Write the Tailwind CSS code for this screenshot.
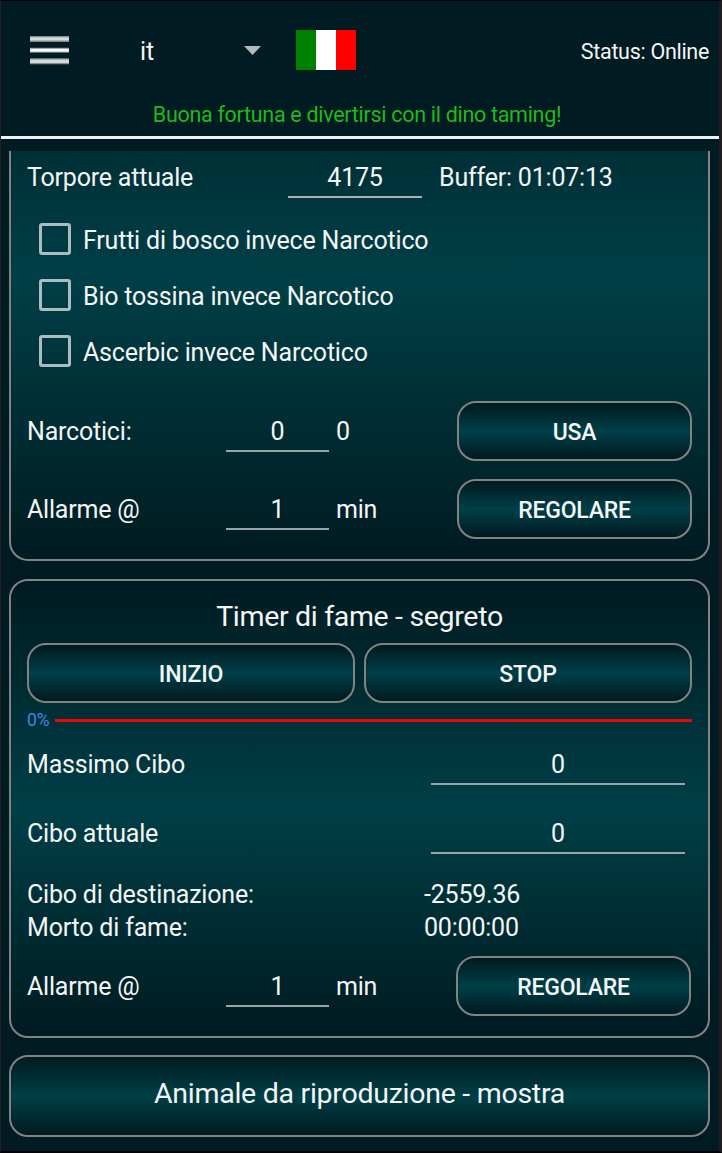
<!DOCTYPE html>
<html lang="it">
<head>
    <meta charset="UTF-8">
    <meta name="viewport" content="width=device-width, initial-scale=1.0">
    <title>Dino Taming</title>
    <script src="https://cdn.jsdelivr.net/npm/@tailwindcss/browser@4"></script>
</head>
<body class="w-[722px] h-[1153px] overflow-hidden bg-[#001b21] border-l border-l-[#262022] border-r-3 border-r-[#211d1f] border-t border-t-black border-b-2 border-b-black font-[Roboto,sans-serif] text-[25px] tracking-[-0.2px] leading-[32px] text-[#f5f5f5]">

    <!-- Header -->
    <header class="h-[138px] border-b-3 border-[#eef0f2]">
        <div class="h-[98px] flex items-center pl-[29px] pr-[10px]">
            <svg class="w-[39px] h-[30px]" viewBox="0 0 39 30">
                <path d="M0 3.9H39M0 26.3H39" stroke="#7f8b8e" stroke-width="6"/>
                <path d="M0 15.2H39" stroke="#7f8b8e" stroke-width="5"/>
                <path d="M0 3.9H39M0 26.3H39" stroke="#d5d9da" stroke-width="3.4"/>
                <path d="M0 15.2H39" stroke="#f8f8f8" stroke-width="3"/>
            </svg>
            <span class="ml-[71px] w-[104px] mt-[4px]">it</span>
            <svg class="w-[17px] h-[9px] mt-px" viewBox="0 0 17 9">
                <path d="M0 0H17L8.5 9Z" fill="#b2babc"/>
            </svg>
            <div class="ml-[35px] flex w-[60px] h-10">
                <div class="flex-1 bg-[#008000]"></div>
                <div class="flex-1 bg-white"></div>
                <div class="flex-1 bg-[#ff0000]"></div>
            </div>
            <span class="ml-auto mt-[3px] text-[21.5px] tracking-[-0.3px]">Status: Online</span>
        </div>
        <p class="text-center text-[21.5px] tracking-[-0.3px] text-[#1fb91f] leading-[32px] pr-[6px]">Buona fortuna e divertirsi con il dino taming!</p>
    </header>

    <main class="pl-2 pr-[9px] pt-[12px]">
        <!-- Torpor card, scrolled under the header -->
        <section class="h-[410px] rounded-b-[19px] border-2 border-t-0 border-[#848181] px-4 bg-[linear-gradient(to_bottom,#001b21_-160px,#003f47_125px,#001b21_408px)]">
            <div class="flex h-[49px]">
                <span class="w-[261px] pt-[11px]">Torpore attuale</span>
                <span class="w-[134px] h-[47px] pt-[11px] border-b-2 border-[#a5b3b5] text-center">4175</span>
                <span class="ml-[17px] pt-[11px]">Buffer: 01:07:13</span>
            </div>
            <div class="pt-[11px] pl-3">
                <div class="flex items-center h-14 gap-3">
                    <span class="size-8 border-3 border-[#abbcc0] rounded-[3px]"></span>
                    <span class="mt-[4px]">Frutti di bosco invece Narcotico</span>
                </div>
                <div class="flex items-center h-14 gap-3">
                    <span class="size-8 border-3 border-[#abbcc0] rounded-[3px]"></span>
                    <span class="mt-[4px]">Bio tossina invece Narcotico</span>
                </div>
                <div class="flex items-center h-14 gap-3">
                    <span class="size-8 border-3 border-[#abbcc0] rounded-[3px]"></span>
                    <span class="mt-[4px]">Ascerbic invece Narcotico</span>
                </div>
            </div>
            <div class="flex items-start mt-[22px] h-[78px]">
                <span class="w-[199px] pt-[15px]">Narcotici:</span>
                <span class="w-[103px] h-[51px] pt-[15px] border-b-2 border-[#98a4a6] text-center">0</span>
                <span class="ml-[7px] pt-[15px]">0</span>
                <button class="ml-auto w-[235px] h-[60px] pt-[3px] rounded-[19px] border-2 border-[#848181] bg-linear-to-b from-[#001b21] via-[#003f47] to-[#001b21] text-[23px] font-medium">USA</button>
            </div>
            <div class="flex items-start">
                <span class="w-[199px] pt-[15px]">Allarme @</span>
                <span class="w-[103px] h-[51px] pt-[15px] border-b-2 border-[#98a4a6] text-center">1</span>
                <span class="ml-[7px] pt-[15px]">min</span>
                <button class="ml-auto w-[235px] h-[60px] pt-[3px] rounded-[19px] border-2 border-[#848181] bg-linear-to-b from-[#001b21] via-[#003f47] to-[#001b21] text-[23px] font-medium">REGOLARE</button>
            </div>
        </section>

        <!-- Hunger timer card -->
        <section class="mt-[18px] h-[459px] rounded-[19px] border-2 border-[#848181] px-4 bg-linear-to-b from-[#001b21] via-[#003f47] to-[#001b21]">
            <h2 class="pt-[20px] h-[62px] text-center text-[28.5px] tracking-[-0.32px]">Timer di fame - segreto</h2>
            <div class="grid grid-cols-2 gap-[9px]">
                <button class="h-[60px] pt-[3px] rounded-[19px] border-2 border-[#848181] bg-linear-to-b from-[#001b21] via-[#003f47] to-[#001b21] text-[23px] font-medium">INIZIO</button>
                <button class="h-[60px] pt-[3px] rounded-[19px] border-2 border-[#848181] bg-linear-to-b from-[#001b21] via-[#003f47] to-[#001b21] text-[23px] font-medium">STOP</button>
            </div>
            <div class="flex items-center h-8">
                <span class="w-[28px] pt-px text-[17.5px] text-[#3f8ae0]">0%</span>
                <span class="flex-1 h-[3px] mt-[2px] bg-[#ec0505]"></span>
            </div>
            <div class="flex justify-between h-[69px] pr-[7px]">
                <span class="pt-[14px]">Massimo Cibo</span>
                <span class="w-[254px] h-[50px] pt-[14px] border-b-2 border-[#98a4a6] text-center">0</span>
            </div>
            <div class="flex justify-between h-[69px] pr-[7px]">
                <span class="pt-[14px]">Cibo attuale</span>
                <span class="w-[254px] h-[50px] pt-[14px] border-b-2 border-[#98a4a6] text-center">0</span>
            </div>
            <div class="grid grid-cols-[397px_1fr] leading-[33px] pt-[5px] h-[83px] content-start">
                <span>Cibo di destinazione:</span>
                <span>-2559.36</span>
                <span>Morto di fame:</span>
                <span>00:00:00</span>
            </div>
            <div class="flex items-start pr-[1px]">
                <span class="w-[199px] pt-[15px]">Allarme @</span>
                <span class="w-[103px] h-[51px] pt-[15px] border-b-2 border-[#98a4a6] text-center">1</span>
                <span class="ml-[7px] pt-[15px]">min</span>
                <button class="ml-auto w-[235px] h-[60px] pt-[3px] rounded-[19px] border-2 border-[#848181] bg-linear-to-b from-[#001b21] via-[#003f47] to-[#001b21] text-[23px] font-medium">REGOLARE</button>
            </div>
        </section>

        <!-- Breeding, collapsed -->
        <button class="mt-[17px] w-full h-[82px] pb-[5px] rounded-[19px] border-2 border-[#848181] bg-linear-to-b from-[#001b21] via-[#003f47] to-[#001b21] text-[28.5px] tracking-[-0.27px]">Animale da riproduzione - mostra</button>
    </main>
</body>
</html>
